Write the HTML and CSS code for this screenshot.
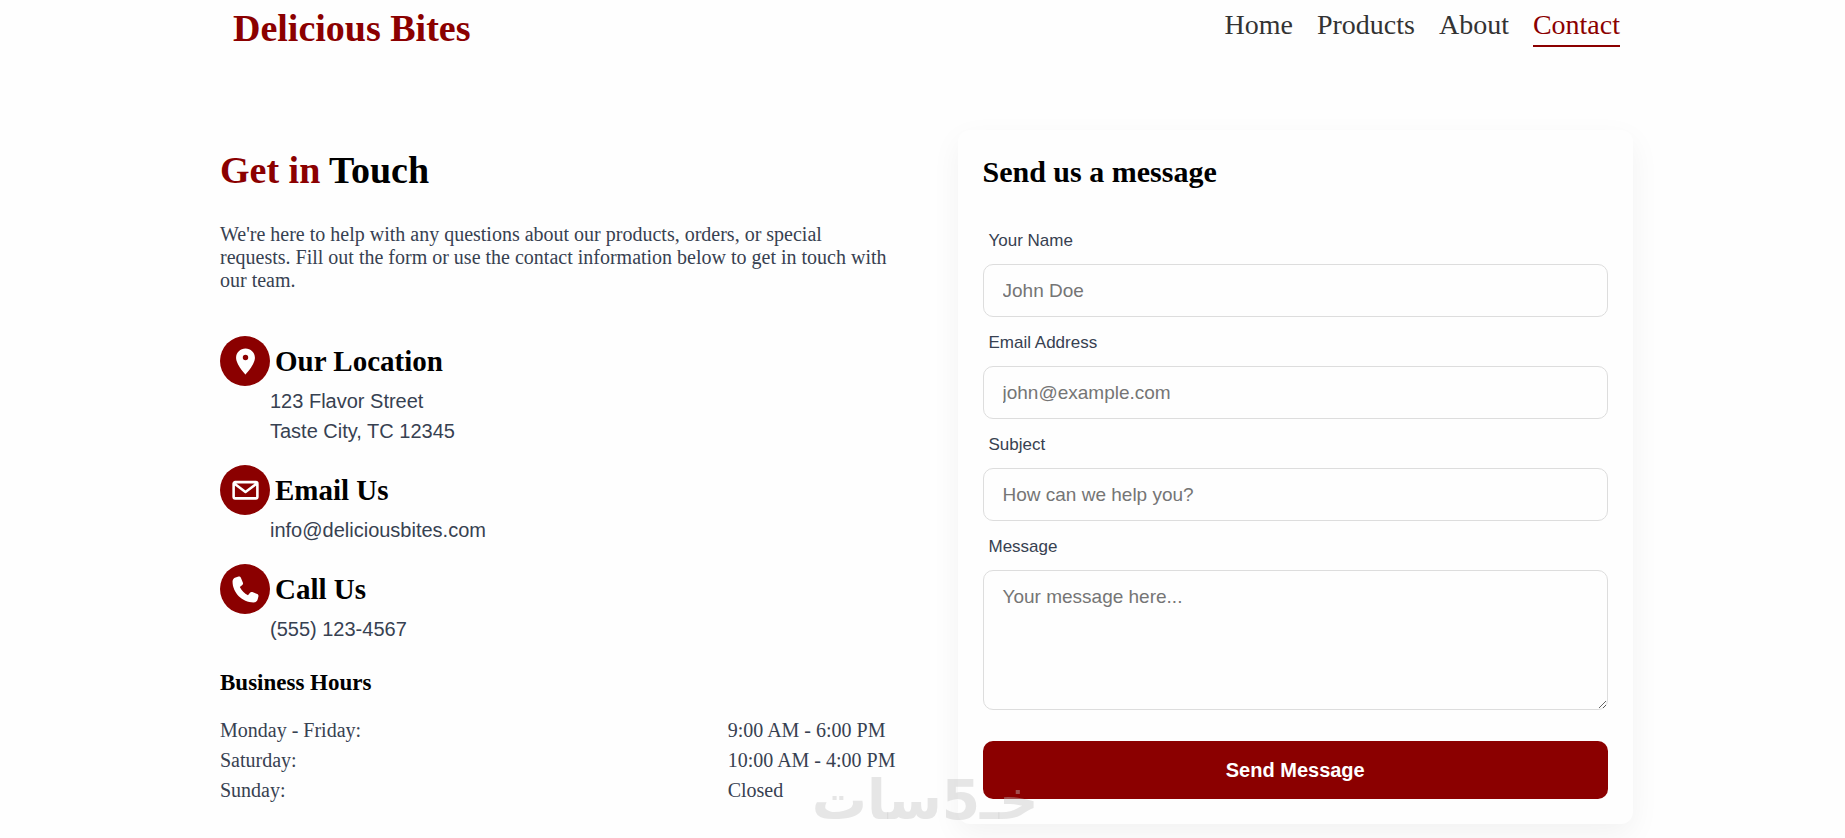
FILE: index.html
```html
<!DOCTYPE html>
<html lang="en">
<head>
    <meta charset="UTF-8">
    <meta name="viewport" content="width=device-width, initial-scale=1.0">
    <title>Contact - Delicious Bites</title>
    <link rel="stylesheet" href="styles.css">
</head>
<body>
    <header class="header">
        <h1 class="logo">Delicious Bites</h1>
        <nav class="nav">
            <a href="#">Home</a>
            <a href="#">Products</a>
            <a href="#">About</a>
            <a href="#" class="active">Contact</a>
        </nav>
    </header>

    <main class="contact">
        <section class="info">
            <h2 class="title"><span>Get in</span> Touch</h2>
            <p class="intro">We're here to help with any questions about our products, orders, or special requests. Fill out the form or use the contact information below to get in touch with our team.</p>

            <div class="item">
                <div class="item-head">
                    <span class="icon">
                        <svg viewBox="0 0 24 24"><path d="M12 2C8 2 4.700 5.130 4.700 9c0 5.250 7.300 13 7.300 13s7.300-7.750 7.300-13c0-3.870-3.300-7-7.300-7zm0 9a2.100 2.100 0 1 1 0-4.200 2.100 2.100 0 0 1 0 4.200z"/></svg>
                    </span>
                    <h3>Our Location</h3>
                </div>
                <p>123 Flavor Street<br>Taste City, TC 12345</p>
            </div>

            <div class="item">
                <div class="item-head">
                    <span class="icon">
                        <svg viewBox="0 0 24 24"><path class="line" d="M4 5.500h16a1.200 1.200 0 0 1 1.200 1.200v10.200a1.200 1.200 0 0 1-1.200 1.200H4a1.200 1.200 0 0 1-1.200-1.200V6.700A1.200 1.200 0 0 1 4 5.500zM3.500 6.800l8.500 6.400 8.500-6.400"/></svg>
                    </span>
                    <h3>Email Us</h3>
                </div>
                <p>info@deliciousbites.com</p>
            </div>

            <div class="item">
                <div class="item-head">
                    <span class="icon">
                        <svg viewBox="-50 -50 612 612"><path d="M165 25c-8-19-28-29-47-24L60 17C24 28 0 60 0 98c0 222 192 414 414 414 38 0 70-24 81-60l16-58c5-19-5-39-24-47l-96-40c-16-7-35-2-46 12l-40 49C234 335 177 278 144 207l49-40c14-11 18-30 12-46l-40-96z"/></svg>
                    </span>
                    <h3>Call Us</h3>
                </div>
                <p>(555) 123-4567</p>
            </div>

            <h4 class="hours-title">Business Hours</h4>
            <table class="hours">
                <tr><td>Monday - Friday:</td><td>9:00 AM - 6:00 PM</td></tr>
                <tr><td>Saturday:</td><td>10:00 AM - 4:00 PM</td></tr>
                <tr><td>Sunday:</td><td>Closed</td></tr>
            </table>
        </section>

        <form class="form">
            <h3 class="form-title">Send us a message</h3>
            <label for="name">Your Name</label>
            <input type="text" id="name" placeholder="John Doe">
            <label for="email">Email Address</label>
            <input type="email" id="email" placeholder="john@example.com">
            <label for="subject">Subject</label>
            <input type="text" id="subject" placeholder="How can we help you?">
            <label for="message">Message</label>
            <textarea id="message" placeholder="Your message here..."></textarea>
            <button type="submit">Send Message</button>
        </form>
    </main>

    <div class="watermark" lang="ar" dir="rtl">خـ5سات</div>
</body>
</html>
```
FILE: styles.css
```css
* {
    margin: 0;
    padding: 0;
    box-sizing: border-box;
}
body {
    font-family: 'Liberation Serif', 'Times New Roman', serif;
    background: #fefefe;
    color: #000;
    min-height: 100vh;
    padding: 0 212px 0 220px;
}
.header {
    display: flex;
    justify-content: space-between;
    align-items: center;
    padding: 6px 13px;
}
.logo {
    color: #8b0000;
    font-size: 38px;
    line-height: 44px;
}
.nav {
    display: flex;
    gap: 24px;
}
.nav a {
    color: #333;
    font-size: 28px;
    line-height: 32px;
    padding-bottom: 4px;
    text-decoration: none;
    border-bottom: 2px solid transparent;
}
.nav a.active {
    color: #8b0000;
    border-bottom-color: #8b0000;
}

/* Contact section */
.contact {
    display: grid;
    grid-template-columns: 1fr 1fr;
    gap: 62px;
    margin-top: 74px;
}
.info {
    padding-top: 18px;
}
.title {
    font-size: 38px;
    line-height: 44px;
}
.title span {
    color: #8b0000;
}
.intro {
    color: #374151;
    font-size: 20px;
    line-height: 23px;
    margin: 31px 0 44px;
}
.item {
    margin-bottom: 19px;
}
.item-head {
    display: flex;
    align-items: center;
    gap: 5px;
}
.item-head h3 {
    font-size: 29px;
}
.icon {
    display: flex;
    align-items: center;
    justify-content: center;
    width: 50px;
    height: 50px;
    background: #8b0000;
    border-radius: 50%;
}
.icon svg {
    width: 31px;
    height: 31px;
    fill: #fff;
}
.icon .line {
    fill: none;
    stroke: #fff;
    stroke-width: 2;
    stroke-linejoin: round;
}
.item p {
    color: #374151;
    font-family: 'Liberation Sans', Arial, sans-serif;
    font-size: 20px;
    line-height: 30px;
    padding-left: 50px;
}
.hours-title {
    font-size: 23px;
    line-height: 28px;
    margin: 25px 0 18px;
}
.hours {
    width: 100%;
    border-collapse: collapse;
    color: #374151;
    font-size: 20px;
    line-height: 30px;
}
.hours td:first-child {
    width: 100%;
}
.hours td {
    white-space: nowrap;
}

/* Form */
.form {
    background: #fefefe;
    border-radius: 12px;
    box-shadow: 0 10px 30px rgba(0, 0, 0, 0.05);
    padding: 25px;
    font-family: 'Liberation Sans', Arial, sans-serif;
}
.form-title {
    font-family: 'Liberation Serif', 'Times New Roman', serif;
    font-size: 30px;
    line-height: 34px;
    margin-bottom: 42px;
}
.form label {
    display: block;
    color: #374151;
    font-size: 17px;
    line-height: 20px;
    padding-left: 6px;
    margin-bottom: 13px;
}
.form input,
.form textarea {
    display: block;
    width: 100%;
    border: 1px solid #ddd;
    border-radius: 10px;
    background: #fefefe;
    font-family: inherit;
    font-size: 19px;
    padding: 15px 19px;
    margin-bottom: 16px;
}
.form input {
    height: 53px;
}
.form textarea {
    height: 140px;
    resize: vertical;
}
.form button {
    width: 100%;
    height: 58px;
    margin-top: 15px;
    border: none;
    border-radius: 10px;
    background: #8b0000;
    color: #fff;
    font-family: inherit;
    font-size: 20px;
    font-weight: bold;
}

/* Watermark over the page */
.watermark {
    position: absolute;
    left: 44%;
    bottom: 6px;
    color: rgba(195, 195, 195, 0.4);
    font-family: 'DejaVu Sans', sans-serif;
    font-size: 55px;
    font-weight: bold;
    line-height: 64px;
    pointer-events: none;
}
```
